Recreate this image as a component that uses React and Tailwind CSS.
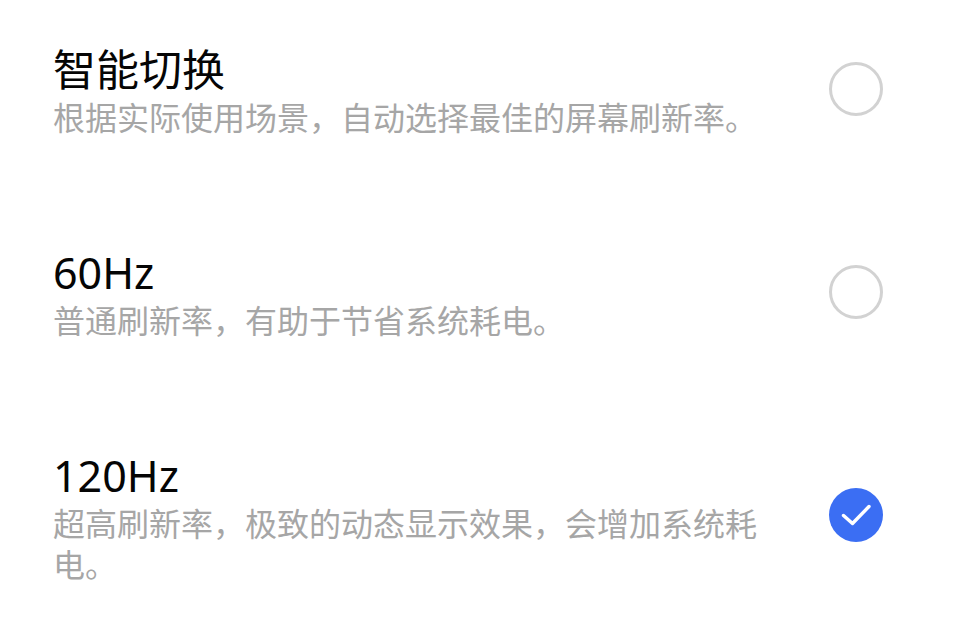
import React from "react";

const items = [
  { title: "智能切换", desc: "根据实际使用场景，自动选择最佳的屏幕刷新率。", checked: false },
  { title: "60Hz", desc: "普通刷新率，有助于节省系统耗电。", checked: false },
  { title: "120Hz", desc: "超高刷新率，极致的动态显示效果，会增加系统耗电。", checked: true },
];

function Radio({ checked }) {
  if (checked) {
    return (
      <div className="w-[54px] h-[54px] shrink-0 mb-[4px] rounded-full bg-[#3b6ef3] flex items-center justify-center">
        <svg width="54" height="54" viewBox="0 0 54 54" fill="none">
          <path d="M14.5 27.5 L23.5 35.5 L40 18.5" stroke="white" strokeWidth="3.4" strokeLinecap="round" strokeLinejoin="round" />
        </svg>
      </div>
    );
  }
  return <div className="w-[54px] h-[54px] shrink-0 mb-[4px] rounded-full border-[3px] border-[#d2d2d2] bg-white" />;
}

export default function App() {
  return (
    <div
      className="w-[965px] h-[626px] bg-white overflow-hidden pt-[43px] flex flex-col gap-[108px]"
      style={{ fontFamily: '"Noto Sans", "Noto Sans CJK SC", sans-serif' }}
    >
      {items.map((it) => (
        <div key={it.title} className="flex items-center pl-[53px] pr-[82px]">
          <div className="flex-1 mr-[56px] min-w-0">
            <div className="text-[43px] leading-[54px] text-[#050505]">{it.title}</div>
            <div className="text-[32px] leading-[41px] text-[#a6a6a6]">{it.desc}</div>
          </div>
          <Radio checked={it.checked} />
        </div>
      ))}
    </div>
  );
}
